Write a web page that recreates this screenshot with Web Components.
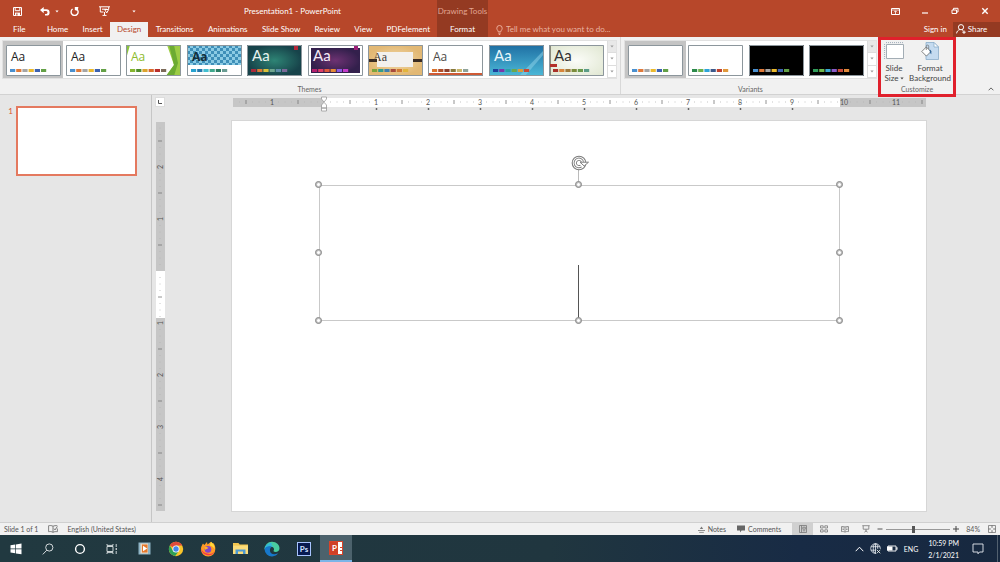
<!DOCTYPE html>
<html lang="en">
<head>
<meta charset="utf-8">
<title>Presentation1 - PowerPoint</title>
<style>
html, body { margin: 0; height: 100%; }
body { font: 8px/10px Lato, "Open Sans", sans-serif; color: #444; overflow: hidden; }
</style>
</head>
<body>
<pp-app></pp-app>
<script>
const RESET = `*{box-sizing:border-box}button{font:inherit;color:inherit;background:none;border:0;padding:0;margin:0;display:flex;align-items:center;justify-content:center}`;
function define(name, css, html) {
  customElements.define(name, class extends HTMLElement {
    constructor() {
      super();
      const root = this.attachShadow({ mode: 'open' });
      root.innerHTML = `<style>${RESET}${css}</style>` + (typeof html === 'function' ? html(this) : html);
    }
  });
}

/* name: [width, height, drawing] */
const ICONS = {
  save: [9, 9, `<path d="M.5.5h8v8h-8z M2.2.5v3.2h4.6V.5" fill="none" stroke="#fff"/><path d="M2 5.6h5v3H2z" fill="#fff"/><path d="M3.3 6.6h1.2v2H3.3z" fill="#b7472a"/>`],
  undo: [10, 9, `<path d="M3.700 0v2.200h2.700a3.200 3.200 0 0 1 0 6.400H5V7h1.300a1.600 1.600 0 0 0 0-3.100H3.700V6.200L0 3.100z" fill="#fff"/>`],
  redo: [9, 9, `<path d="M2.6 2A3.5 3.5 0 1 0 6.6 2" fill="none" stroke="#fff" stroke-width="1.4"/><path d="M4.8.1h3.6L7.6 4 4.8 3z" fill="#fff"/>`],
  show: [11, 10, `<path d="M0 .8h11M1.3 1v5h3.2M9.7 1v2M5.5 6v3M3.5 9.4h4M3 3.2h5" fill="none" stroke="#fff"/><path d="M5.7 3.5h4L7.7 7z" fill="none" stroke="#fff"/>`],
  caret: [4, 3, `<path d="M.4.5h3.2L2 2.4z" fill="currentColor"/>`],
  ribbonopt: [9, 7, `<path d="M.5.5h8v6h-8z" fill="none" stroke="#fff"/><path d="M1 2h7M4.5 6V3M3 4.3 4.5 2.8 6 4.3" fill="none" stroke="#fff" stroke-width=".8"/>`],
  min: [8, 8, `<path d="M1 6h6" stroke="#fff" stroke-width="1.2"/>`],
  restore: [8, 8, `<path d="M1 3h4.5v3.5H1zM2.5 3V1.3H7V5H5.5" fill="none" stroke="#fff"/>`],
  close: [8, 8, `<path d="m1.3 1.3 5.4 5.4m0-5.4L1.3 6.7" stroke="#fff" stroke-width="1.4"/>`],
  bulb: [7, 10, `<path d="M2.2 6.8C2.2 5.4.8 5 .8 3.2a2.7 2.7 0 0 1 5.4 0c0 1.8-1.4 2.2-1.4 3.6zM2.3 8.2h2.4M2.8 9.5h1.4" fill="none" stroke="#f0b7a5" stroke-width=".9"/>`],
  person: [10, 10, `<circle cx="5" cy="3.2" r="2.6" fill="none" stroke="#fff"/><path d="M.6 9.4C.8 7.5 2 6 3.8 5.6M6 5.6l1.3 1.2M6.3 8.2h3.4M8 6.5v3.4" fill="none" stroke="#fff"/>`],
  slidesize: [20, 18, `<path d="M2.5 2.5h17v14h-17z" fill="#fff" stroke="#a3adb5"/><path d="M2 .6h18M.6 2v15" stroke="#a0adba" stroke-dasharray="1 1"/>`],
  format: [18, 18, `<path d="M5 .5h8l4.500 4.500V17.500H5z" fill="#c5dbf0" stroke="#8cadca" stroke-width=".8"/><path d="M13 .5V5h4.500z" fill="#fff" stroke="#8cadca" stroke-width=".8"/><path d="m.8 9.500 4.500-4.500 4.600 4.600-4.500 4.500z" fill="#fff" stroke="#666" stroke-width=".8"/><path d="M5.300 8V4.300a1.200 1.200 0 0 1 2.400 0V7" fill="none" stroke="#777" stroke-width=".8"/><path d="M8.600 7.500c1.600.6 2 2 1.700 4.700-1.300-.7-1.600-2-1.700-4.700" fill="#32689b"/>`],
  up: [6, 4, `<path d="m.6 3.300 2.400-2.400 2.400 2.400" fill="none" stroke="#555" stroke-width=".9"/>`],
  spell: [10, 8, `<path d="M5 1.200C3.500.4 2 .4.600.7v6c1.400-.3 3-.2 4.400.6zM5 1.200C6.300.6 7.500.500 9.300.7M5 7.300c1.400-.7 2.600-.8 4.400-.6V3.500" fill="none" stroke="#666" stroke-width=".8"/><path d="m6 3.600 1 1.300L9.400 1.500" fill="none" stroke="#666" stroke-width=".9"/>`],
  notes: [7, 7, `<path d="M0 4.500h7M1.200 6.400h4.600" stroke="#777" stroke-width=".8"/><path d="M1.800 3 3.500.6 5.200 3z" fill="#777"/>`],
  comment: [8, 8, `<path d="M0 .6h8v4.800H4.600L3 7.400v-2H0z" fill="#666"/>`],
  normal: [8, 8, `<path d="M.5.5h7v7h-7zM2.500.5v7M3.800 2.200h2.500v2H3.800zM3.800 5.800h2.500" fill="none" stroke="#777" stroke-width=".8"/>`],
  sorter: [8, 8, `<path d="M.5.8h2.700v2.200H.5zM4.800.8h2.700v2.200H4.800zM.5 4.800h2.700V7H.5zM4.800 4.800h2.700V7H4.800z" fill="none" stroke="#777" stroke-width=".8"/>`],
  reading: [8, 7, `<path d="M4 1C3 .4 1.500.4.500.6v5C1.600 5.400 3 5.500 4 6.200 5 5.500 6.400 5.400 7.500 5.600v-5C6.500.4 5 .4 4 1zv5M1.500 2h1.400M1.500 3.500h1.400M5.100 2h1.400M5.100 3.500h1.400" fill="none" stroke="#777" stroke-width=".8"/>`],
  present: [8, 8, `<path d="M.3.700h7.400M1.200.8v3.400h5.600V.8M4 4.200v2.600M2.400 7.200 4 5.800l1.600 1.400" fill="none" stroke="#777" stroke-width=".8"/>`],
  minus: [6, 6, `<path d="M.5 3h5" stroke="#555"/>`],
  plus: [6, 6, `<path d="M0 3h6M3 0v6" stroke="#444"/>`],
  fit: [8, 8, `<path d="M.5.5h7v7h-7z" fill="none" stroke="#777" stroke-width=".8"/><path d="M4 .5v2.300M4 7.500V5.200M.5 4h2.300M7.500 4H5.200" stroke="#666" stroke-width=".9"/>`],
  windows: [12, 12, `<path d="M.5 2.200 5.200 1.500v4H.5zM5.900 1.400 11.500.6v4.900H5.900zM.5 6.200h4.700v4L.5 9.500zM5.900 6.200h5.600v5l-5.600-.8z" fill="#fff"/>`],
  search: [12, 12, `<circle cx="7.300" cy="4.500" r="3.600" fill="none" stroke="#e6eaec" stroke-width=".9"/><path d="m4.800 7.200-4 4.200" stroke="#e6eaec" stroke-width=".9"/>`],
  cortana: [12, 12, `<circle cx="6" cy="6" r="4.400" fill="none" stroke="#fff" stroke-width="1.400"/>`],
  taskview: [12, 12, `<path d="M1 3.500h6v5H1zM1 1v1.400h6V1M1 11V9.600h6V11M10.200 1v3M10.200 8v3" fill="none" stroke="#dfe5e7" stroke-width=".9"/><path d="M9.700 5h1v2h-1z" fill="#fff"/>`],
  media: [13, 13, `<path d="M.5.5h12v12H.5z" fill="#8fb5c6"/><path d="M2.500 1.500h7.500v10H2.500z" fill="#ecd9c5"/><path d="M4 2.500h5.500v8H4z" fill="#e5782b"/><path d="M5 3.800v5.400l4.200-2.700z" fill="#fff"/>`],
  chrome: [16, 16, `<circle cx="8" cy="8" r="7.200" fill="#f9c52a"/><path d="M8 8 1.800 4.400a7.200 7.200 0 0 1 12.500 0L8 4.600z" fill="#df4b3c"/><path d="M1.800 4.400a7.200 7.200 0 0 0 5.400 10.700L11 9.800 8 11.300 4.900 9.500z" fill="#2ea057"/><circle cx="8" cy="8" r="3.500" fill="#fff"/><circle cx="8" cy="8" r="2.700" fill="#4387ea"/>`],
  firefox: [16, 16, `<path d="M3 2.500 4.300 4 7 1l.5 2.500L11 .8c.7 1 1.200 1.500 1.700 2l.6-.8c1.600 2 2.200 4 2 6.300A7.200 7.200 0 0 1 .9 8.500C.9 6 1.900 4 3 2.500z" fill="#ff9a25"/><path d="M1.200 6.500A7.200 7.200 0 0 0 14.900 10c-2 3-5 3.500-7.500 2.500C4 12 1.500 9.800 1.200 6.500z" fill="#f4394b"/><path d="M11 .8c2.500 2 4 4.500 3.600 7.400C13.500 6 12 5 9.800 4.400z" fill="#ffd83b"/><circle cx="8" cy="8.400" r="3.300" fill="#8144c8"/><path d="M4.300 6.500C6 5 7 6.500 8.500 6.800 7.500 8 6 8 5.500 9z" fill="#ffb02e"/>`],
  folder: [15, 13, `<path d="M0 1h5.500l1.200 1.500H15V12H0z" fill="#f4c64f"/><path d="M0 3.600h15V12H0z" fill="#fbdc7a"/><path d="M2.500 7.500h10V12h-10z" fill="#4e9ad2"/><path d="M5 9.500h5V12H5z" fill="#fbdc7a"/>`],
  edge: [16, 16, `<path d="M.6 8.500A7.300 7.300 0 0 1 8 .7c4.500 0 7.500 3 7.500 6.500 0 2.500-1.800 3.800-4 3.800-1.500 0-2.400-.6-1.800-1.400.8-1.400.3-3.600-2.200-3.900C4.500 5.200 1.500 6 .6 8.500z" fill="#49cda0"/><path d="M.6 8.500c.2-4.300 4-7 7.900-6.500C5.500 3.500 9 4 9.300 6 6 4 2 6 .6 8.500z" fill="#31b7dc"/><path d="M.6 8.500C1 5.500 5.500 4.500 7.800 6 5 6.800 5 13.500 10.500 13.300c1.700 0 3-.7 3.800-1.200A7.300 7.300 0 0 1 8 15.400 7.200 7.200 0 0 1 .6 8.500z" fill="#1778cb"/>`],
  chevron: [9, 6, `<path d="m.7 5.200 3.800-4 3.800 4" fill="none" stroke="#fff"/>`],
  globe: [11, 11, `<g fill="none" stroke="#e8edf2" stroke-width=".8"><circle cx="5.500" cy="5.500" r="4.800"/><ellipse cx="5.500" cy="5.500" rx="2.200" ry="4.800"/><path d="M1 3.700h9M1 7.200h9M5.500.7v9.600"/></g><path d="M6 6h5v5H6z" fill="#1b2e42"/><path d="m6.800 6.800 3.500 3.500m0-3.500-3.500 3.500" stroke="#fff" stroke-width=".8"/>`],
  battery: [11, 7, `<path d="M1 1h8v5H1z" fill="none" stroke="#fff" stroke-width=".9"/><path d="M0 1.500h5.500v4H0zM9.300 2.300h1.200v2.400H9.300z" fill="#fff"/>`],
  action: [12, 12, `<path d="M1 1h10v8H7.500L6 10.800V9H1z" fill="none" stroke="#e6eaf0" stroke-width=".9"/>`],
  rotate: [19, 16, `<circle cx="8" cy="8" r="6.800" fill="#fff" stroke="#7d7d7d" stroke-width="1.100"/><path d="M11.500 7A3.700 3.700 0 1 0 10 11" fill="none" stroke="#7d7d7d" stroke-width="3.200"/><path d="M11.500 7A3.700 3.700 0 1 0 10 11" fill="none" stroke="#fff" stroke-width="1.400"/><path d="M9 7.200h8.500L13.200 11z" fill="#fff" stroke="#7d7d7d"/>`]
};
define('pp-icon', `:host{display:inline-flex;flex:none}svg{display:block}`, el => {
  const [w, h, d] = ICONS[el.getAttribute('name')];
  return `<svg width="${w}" height="${h}" viewBox="0 0 ${w} ${h}" aria-hidden="true">${d}</svg>`;
});
const icon = n => `<pp-icon name="${n}"></pp-icon>`;

/* app badges whose mark is a letter */
define('pp-badge', `:host{display:flex;flex:none;width:14px;height:14px;align-items:center;justify-content:center;font-size:8px;font-weight:700}
:host([kind=ps]){background:#071a50;border:1px solid #a8c4ff;color:#cfe0ff}
:host([kind=pp]){background:linear-gradient(#d8442a,#d8442a) 10px 5px/2px 1px no-repeat,linear-gradient(#d8442a,#d8442a) 10px 8px/2px 1px no-repeat,linear-gradient(90deg,#cf4027 65%,#fff 65%);border:1px solid #d8442a;color:#fff;justify-content:flex-start;padding-left:2px}`, `<slot></slot>`);

/* ---------- title bar and tabs ---------- */
define('pp-quick-access', `:host{display:flex;height:22px;align-items:center;padding-left:13px;color:#fff}
.r{margin-left:11px}.s{margin-left:20px}.u{margin-left:18px}.c{margin-left:5px}.m{margin-left:22px}
h1{font:inherit;margin:0 0 0 auto;padding-right:96px}`,
 `<button aria-label="Save">${icon('save')}</button><button class="u" aria-label="Undo">${icon('undo')}</button><button class="c" aria-label="Undo list">${icon('caret')}</button><button class="r" aria-label="Repeat">${icon('redo')}</button><button class="s" aria-label="Start slide show">${icon('show')}</button><button class="m" aria-label="Customize">${icon('caret')}</button><h1>Presentation1 - PowerPoint</h1>`);
define('pp-tab', `:host{display:block}button{height:15px;padding:0 7px 1px;color:#fff;white-space:nowrap}
:host([selected]) button{background:#f1f1f1;color:#b7472a}:host([file]) button{padding:0 14px 1px 13px}:host([wide]) button{width:100%}`, `<button><slot></slot></button>`);
define('pp-header', `:host{display:grid;grid-template-columns:437px 51px 1fr;background:#b7472a;color:#fff;flex:none}
nav{display:flex;justify-content:space-between}
.ctx{background:#943a22}.ctx p{margin:0;height:22px;line-height:22px;text-align:center;color:#e2a592;white-space:nowrap}
.win{display:flex;height:22px;align-items:center;justify-content:flex-end}.win button{width:30px;height:20px}
.row{display:flex;height:15px;align-items:center}label{display:flex;align-items:center;padding:0 3px 0 8px}
input{font:inherit;color:#fff;background:none;border:0;padding:0 0 1px;width:160px;height:15px;outline:0}input::placeholder{color:#e8b3a2;opacity:1}
.sign{margin-left:auto;padding:0 6px 1px 0}.share{background:#943a22;height:15px;width:47px;gap:2px;padding:0 10px 1px 0}
@media(max-width:800px){input{width:110px}}`,
`<div><pp-quick-access></pp-quick-access><nav><pp-tab file>File</pp-tab><pp-tab>Home</pp-tab><pp-tab>Insert</pp-tab><pp-tab selected>Design</pp-tab><pp-tab>Transitions</pp-tab><pp-tab>Animations</pp-tab><pp-tab>Slide Show</pp-tab><pp-tab>Review</pp-tab><pp-tab>View</pp-tab><pp-tab>PDFelement</pp-tab></nav></div>
<div class="ctx"><p>Drawing Tools</p><pp-tab wide>Format</pp-tab></div>
<div><div class="win"><button aria-label="Ribbon display options">${icon('ribbonopt')}</button><button aria-label="Minimize">${icon('min')}</button><button aria-label="Restore">${icon('restore')}</button><button aria-label="Close">${icon('close')}</button></div>
<div class="row"><label for="tell" aria-label="Tell me">${icon('bulb')}</label><input id="tell" type="text" placeholder="Tell me what you want to do..."><button class="sign">Sign in</button><button class="share">${icon('person')}Share</button></div></div>`);

/* ---------- ribbon ---------- */
const OFFICE = '#4a90cf #e07a3a #a5a5a5 #eab92d #3d62b0 #63a046';
const THEMES = {
  office: { c: OFFICE },
  plain: { c: OFFICE },
  facet: { t: '#8dbb2c', c: '#85b52f #4f8c2c #dba32e #d9682b #b92f2c #7b6a58', b: `<path d="M0 0h4L0 14z" fill="#8cc43c"/><path d="M41 0h14v31H40l8-11z" fill="#9ccc45"/><path d="M43 0h5l4 18-4 13h-8l8-11z" fill="#6cab32"/>` },
  integral: { t: '#14303c', w: 700, c: '#27a2cf #2478ad #42bfd0 #3fa88c #2d7d63 #6a9c93', b: `<defs><pattern id="p" width="6" height="6" patternUnits="userSpaceOnUse"><path d="M0 0h6v6H0z" fill="#8bcbe4"/><path d="M0 0h3v3H0zM3 3h3v3H3z" fill="#3e8fb8"/></pattern></defs><path d="M0 0h55v20H0z" fill="url(#p)"/>` },
  ion: { t: '#e6f1ef', wide: 1, c: '#a92a3b #dc7a35 #d9c13a #6fa58f #5c8ca6 #7a6a98', b: `<radialGradient id="g"><stop stop-color="#2e8475"/><stop offset="1" stop-color="#17434a"/></radialGradient><path d="M0 0h55v31H0z" fill="url(#g)"/><path d="M47 0h4v5h-4z" fill="#b5283a"/>` },
  board: { t: '#f4e9f6', wide: 1, c: '#b4206e #e03d66 #df5b3c #e58a35 #8c5be0 #c23bc8', b: `<radialGradient id="g"><stop stop-color="#6d3272"/><stop offset="1" stop-color="#33204c"/></radialGradient><path d="M3 3h49v25H3z" fill="url(#g)"/><path d="M46 0h4v5h-4z" fill="#9c2077"/>` },
  organic: { t: '#3e3a35', f: 'Liberation Serif', c: '#7ba43c #2f9d8a #3d7fb0 #a84a3c #d07a35 #e2b53c', b: `<radialGradient id="g"><stop stop-color="#f3d9a8"/><stop offset="1" stop-color="#e2b874"/></radialGradient><path d="M0 0h55v31H0z" fill="url(#g)"/><path d="M0 14h12v3H0zM43 14h12v3H43z" fill="#3a2b22"/><path d="M9 7h36v15H9z" fill="#f3f1ee"/>` },
  retro: { t: '#4d4a47', c: '#d9722e #b0502c #8c3f2c #8a7a3c #c7b56b #8fa39a', b: `<path d="M0 28h55v3H0z" fill="#cf5a35"/>` },
  slice: { t: '#e8f6fb', wide: 1, c: '#1d3f9c #7b36a8 #27a0a8 #6aa84c #d99a3c #c94a35', b: `<linearGradient id="g" x2="0" y2="1"><stop stop-color="#1f6fa3"/><stop offset="1" stop-color="#4cb9d8"/></linearGradient><path d="M0 0h55v31H0z" fill="url(#g)"/><path d="M30 31 55 5v4L36 31z" fill="#8fd4ea" opacity=".5"/>` },
  wisp: { t: '#333', wide: 1, c: '#a8322a #d8853a #a07a3a #7b8c3c #6a9a4c #5c9c88', b: `<radialGradient id="g" r=".7"><stop stop-color="#fbfcf8"/><stop offset="1" stop-color="#dfe6d0"/></radialGradient><path d="M0 0h55v31H0z" fill="url(#g)"/><path d="M0 0h2v31H0z" fill="#8b8b7b"/><path d="M0 19h8v3H0z" fill="#b3302a"/>` },
  v1: { n: 1, c: OFFICE },
  v2: { n: 1, c: '#2c8a4c #6ab04a #2ea3d8 #3c5a8c #c0432f #e0983a' },
  v3: { n: 1, k: 1, c: OFFICE },
  v4: { n: 1, k: 1, c: '#2f9c5a #6fb84c #3aa8d0 #8a5bc8 #c84a3a #e08a3a' }
};
define('pp-theme', `:host{display:flex;justify-content:center;padding:3px 2px 2px}
svg{display:block;width:55px;height:31px}
:host([selected]){background:#c4c4c4}`, el => {
  const n = el.getAttribute('name'), t = THEMES[n];
  const aa = t.n ? '' : `<text x="5" y="16" font-size="${t.wide ? 15 : 12}" font-family="${t.f || (t.wide ? 'Lato' : 'Open Sans')}, sans-serif" font-weight="${t.w || 400}" fill="${t.t || '#222'}">Aa</text>`;
  const sw = t.c.split(' ').map((c, i) => `<path d="M${4 + i * 6.200} 24h5.200v3h-5.200z" fill="${c}"/>`).join('');
  return `<button aria-label="${n}"><svg viewBox="0 0 55 31"><path d="M0 0h55v31H0z" fill="${t.k ? '#000' : '#fff'}"/>${t.b || ''}${aa}${sw}<path d="M.5.5h54v30H.5z" fill="none" stroke="#8c969c"/></svg></button>`;
});
define('pp-gallery', `:host{display:flex;background:#fff;border:1px solid #e1e1e1;height:39px}
.items{display:grid;grid-auto-flow:column;grid-auto-columns:1fr;flex:1;min-width:0}
.scroll{display:grid;grid-template-rows:repeat(3,1fr);width:9px;color:#999}.scroll button{border-left:1px solid #ddd;border-bottom:1px solid #ddd;background:#fff}.scroll button:first-child{background:#e8e8e8}`,
`<div class="items"><slot></slot></div><div class="scroll"><button aria-label="Previous row">${icon('caret')}</button><button aria-label="Next row">${icon('caret')}</button><button aria-label="More">${icon('caret')}</button></div>`);
define('pp-big-button', `:host{display:block}button{flex-direction:column;white-space:nowrap;width:100%}.i{height:20px;display:flex;align-items:center;margin-bottom:2px}`, `<button><span class="i"><slot name="icon"></slot></span><slot></slot></button>`);
define('pp-ribbon', `:host{display:grid;grid-template-columns:621fr 257fr 78px 44px;grid-template-rows:57px;height:58px;flex:none;background:#f1f1f1;border-bottom:1px solid #d2d2d2}
section{display:flex;flex-direction:column;padding:3px 3px 0 2px;min-width:0}.a{border-right:1px solid #d8d8d8}.v{padding:3px 1px 0 3px}
h2{font:inherit;font-size:7px;line-height:10px;margin:auto 0 0;text-align:center;color:#666}
.cust{border:3px solid #e0202c;height:60px;padding:0;z-index:1;background:#f1f1f1}
.btns{display:grid;grid-template-columns:26px 1fr;padding-top:1px}.end{display:flex;align-items:flex-end;justify-content:flex-end;padding:0 6px 3px 0}
.btns span{display:flex;align-items:center;gap:1px}`,
`<section class="a"><pp-gallery><pp-theme selected name="office"></pp-theme>${['plain','facet','integral','ion','board','organic','retro','slice','wisp'].map(n => `<pp-theme name="${n}"></pp-theme>`).join('')}</pp-gallery><h2>Themes</h2></section>
<section class="v"><pp-gallery><pp-theme selected name="v1"></pp-theme><pp-theme name="v2"></pp-theme><pp-theme name="v3"></pp-theme><pp-theme name="v4"></pp-theme></pp-gallery><h2>Variants</h2></section>
<section class="cust"><div class="btns"><pp-big-button><pp-icon slot="icon" name="slidesize"></pp-icon>Slide<span>Size ${icon('caret')}</span></pp-big-button><pp-big-button><pp-icon slot="icon" name="format"></pp-icon><span>Format</span><span>Background</span></pp-big-button></div><h2>Customize</h2></section>
<div class="end"><button aria-label="Collapse the ribbon">${icon('up')}</button></div>`);

/* ---------- workspace ---------- */
define('pp-slides-pane', `:host{display:grid;grid-template-columns:16px 1fr;align-content:start;width:152px;padding:11px 14px 0 0;border-right:1px solid #c6c6c6}
span{color:#d9532f;text-align:right;padding-right:3px}button{background:#fff;border:2px solid #e4795f;aspect-ratio:121/70;width:100%}`, `<span>1</span><button aria-label="Slide 1"></button>`);

/* Rulers: one inch is 52 units; labels stand on inches, ticks on halves, dots on eighths. */
function rulerMarks(zero, len, upright) {
  let s = '';
  for (let i = Math.ceil(-zero / 6.5); zero + i * 6.5 < len - 1; i++) {
    const p = zero + i * 6.5;
    if (p < 4 || i === 0) continue;
    if (i % 8 === 0) {
      const n = Math.abs(i / 8);
      s += upright ? `<text x="${p}" y="7.500" text-anchor="middle">${n}</text>`
                   : `<text text-anchor="middle" transform="translate(7.500 ${p}) rotate(-90)">${n}</text>`;
    } else {
      const half = i % 4 === 0, h = half ? 4 : 1;
      s += `<path stroke="${half ? '#777' : '#b6b6b6'}" d="${upright ? `M${p} ${5 - h / 2}v${h}` : `M${5 - h / 2} ${p}h${h}`}"/>`;
    }
  }
  return s;
}
const RCSS = `svg{display:block;width:100%;height:auto;overflow:visible}text{font:7px Lato,sans-serif;fill:#555}path{stroke-width:.8}`;
define('pp-ruler-h', `:host{display:block}${RCSS}`, () => {
  let tabs = '';
  for (let x = 144; x < 600; x += 52) tabs += `<path d="M${x + .5} 11v2" style="stroke:#666;stroke-width:1.500"/>`;
  return `<svg viewBox="0 0 694 10"><rect x="1" y="1" width="693" height="9" fill="#c6c6c6"/><rect x="92" y="1" width="516" height="9" fill="#fff"/>${rulerMarks(92, 694, true)}${tabs}<path d="M89.500 0h5v2L92 5l-2.500-3zM89.500 11V8L92 5.300 94.500 8v3zM89.500 11h5v3h-5z" style="fill:#fff;stroke:#999;stroke-width:.8"/></svg>`;
});
define('pp-ruler-v', `:host{display:block;width:10px}${RCSS}`, () =>
  `<svg viewBox="0 0 10 390"><rect x="1" y="1" width="9" height="389" fill="#c6c6c6"/><rect x="1" y="150" width="9" height="47" fill="#fff"/>${rulerMarks(150, 390, false)}</svg>`);

/* The text box floats on the slide, so it is placed in per cent of the slide. */
define('pp-text-box', `:host{position:absolute;left:12.500%;right:12.400%;top:16.400%;bottom:48.700%;outline:1px solid #c9c9c9;outline-offset:-1px}
i{position:absolute;width:7px;height:7px;margin:-4px;border:1px solid #7f7f7f;border-radius:50%;background:#fff;box-shadow:0 0 0 1px #bbb inset}
.l{left:0}.c{left:50%}.r{left:100%}.t{top:0}.m{top:50%}.b{top:100%}
.stem{position:absolute;left:50%;top:-16px;height:16px;border-left:1px solid #bbb;margin-left:-1px}
.rot{position:absolute;left:50%;top:-30px;margin-left:-8px}
.caret{position:absolute;left:50%;top:59%;bottom:0;border-left:1px solid #555;margin-left:-1px}`,
`<div class="caret"></div><div class="stem"></div><pp-icon class="rot" name="rotate"></pp-icon>${['l t','c t','r t','l m','r m','l b','c b','r b'].map(c => `<i class="${c}"></i>`).join('')}`);
define('pp-slide', `:host{display:block;position:relative;background:#fff;aspect-ratio:694/390;box-shadow:0 0 0 1px #d6d6d6}`, `<slot></slot>`);
define('pp-stage', `:host{display:grid;grid-template-columns:10px 1fr;grid-template-rows:10px auto;gap:14px 67px;align-content:start;flex:1;padding:2px 74px 0 3px;min-width:0}
.corner{background:#fff;border:1px solid #ddd;width:10px;height:10px}.corner svg{display:block}`,
`<button class="corner" aria-label="Tab stop"><svg width="8" height="8"><path d="M2.500 2v3.500H6" fill="none" stroke="#555"/></svg></button><pp-ruler-h></pp-ruler-h><pp-ruler-v></pp-ruler-v><pp-slide><pp-text-box></pp-text-box></pp-slide>`);

/* ---------- status bar ---------- */
define('pp-status', `:host{display:flex;align-items:center;height:13px;flex:none;background:#f1f1f1;border-top:1px solid #d0d0d0;padding:0 4px;font-size:7px;color:#555;white-space:nowrap}
.lang{margin-left:9px}.spell{margin-left:10px}.right{display:flex;align-items:center;margin-left:auto}
.n{gap:3px;margin-right:11px}.v{width:21px;height:12px}.on{background:#d0d0d0}
input{appearance:none;width:64px;height:10px;margin:0 3px;background:linear-gradient(#999,#999) center/100% 1px no-repeat}
input::-webkit-slider-thumb{appearance:none;width:3px;height:7px;background:#555}.out{margin-left:1px}.z{margin:0 8px 0 7px}`,
`<span>Slide 1 of 1</span><button class="spell" aria-label="Spelling">${icon('spell')}</button><button class="lang">English (United States)</button>
<div class="right"><button class="n">${icon('notes')}Notes</button><button class="n">${icon('comment')}Comments</button><button class="v on" aria-label="Normal">${icon('normal')}</button><button class="v" aria-label="Slide sorter">${icon('sorter')}</button><button class="v" aria-label="Reading view">${icon('reading')}</button><button class="v" aria-label="Slide show">${icon('present')}</button><button class="out" aria-label="Zoom out">${icon('minus')}</button><input type="range" aria-label="Zoom" min="0" max="100" value="42"><button aria-label="Zoom in">${icon('plus')}</button><button class="z">84%</button><button aria-label="Fit to window">${icon('fit')}</button></div>`);

/* ---------- taskbar ---------- */
define('pp-taskbar', `:host{display:flex;align-items:stretch;height:27px;flex:none;background:linear-gradient(90deg,#213940 0%,#20363f 55%,#182b45 80%,#17283f 100%);color:#fff}
.app{width:32px;height:27px}.on{background:#4c626c;border-bottom:2px solid #7cb5e8}
.tray{display:flex;align-items:center;margin-left:auto;gap:6px;font-size:7px}.clock{line-height:12px;text-align:center;margin-left:4px}
.act{margin:0 13px 0 7px;padding:0}.peek{align-self:stretch;border-left:1px solid #52606f;width:3px}`,
`${['windows','search','cortana','taskview','media','chrome','firefox','folder','edge'].map(n => `<button class="app" aria-label="${n}">${icon(n)}</button>`).join('')}<button class="app"><pp-badge kind="ps">Ps</pp-badge></button><button class="app on"><pp-badge kind="pp">P</pp-badge></button>
<div class="tray"><button aria-label="Hidden icons">${icon('chevron')}</button>${icon('globe')}${icon('battery')}<button>ENG</button><div class="clock"><div>10:59 PM</div><div>2/1/2021</div></div><button class="act" aria-label="Notifications">${icon('action')}</button></div><div class="peek"></div>`);

define('pp-app', `:host{display:flex;flex-direction:column;min-height:100vh}main{display:flex;flex:1;background:#e6e6e6}`,
`<pp-header></pp-header><pp-ribbon></pp-ribbon><main><pp-slides-pane></pp-slides-pane><pp-stage></pp-stage></main><pp-status></pp-status><pp-taskbar></pp-taskbar>`);
</script>
</body>
</html>
